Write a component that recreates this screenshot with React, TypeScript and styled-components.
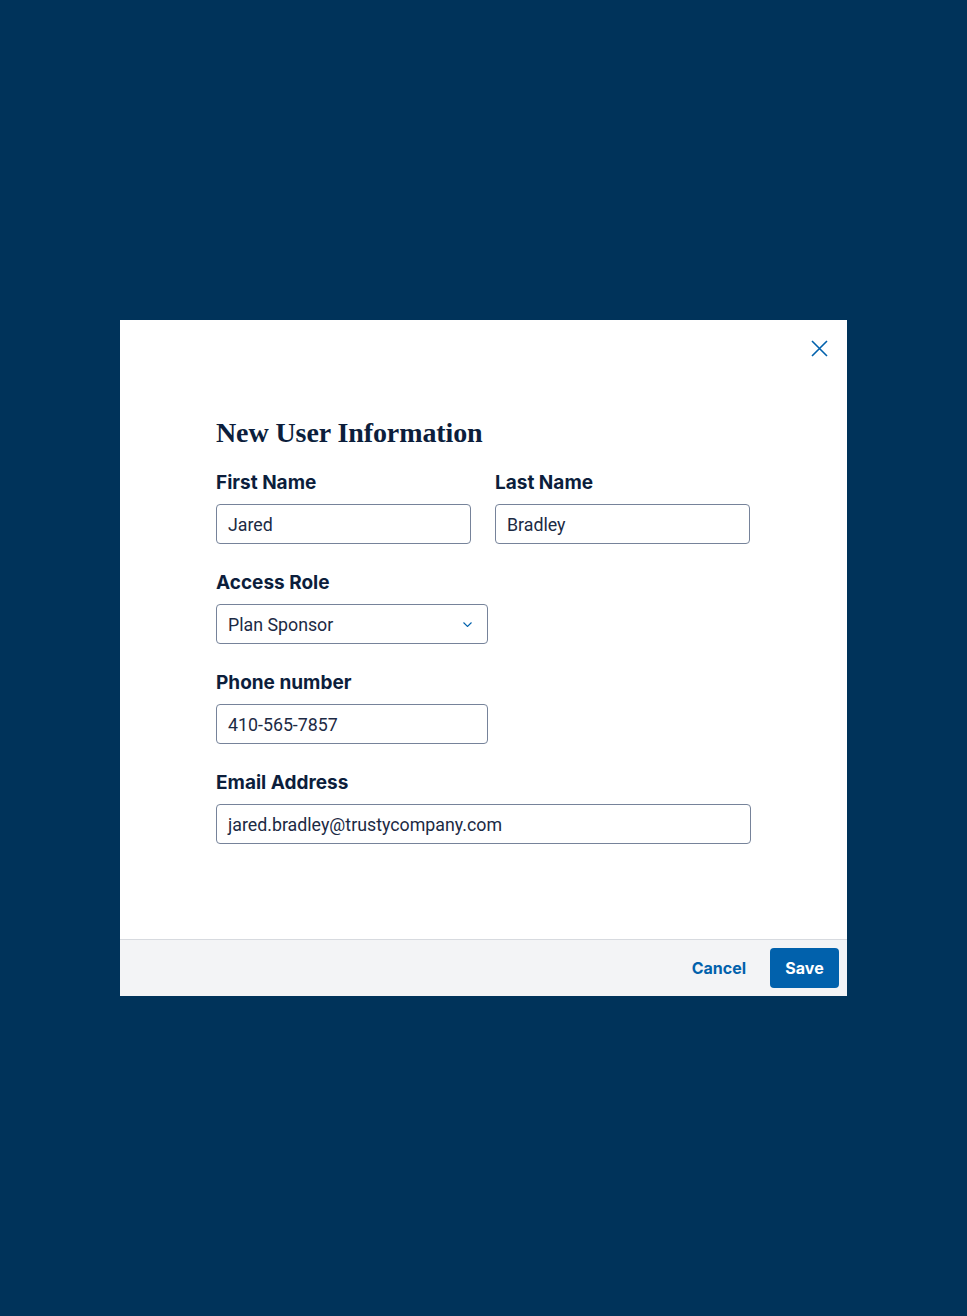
import React from 'react'
import styled, { createGlobalStyle } from 'styled-components'

const GlobalStyle = createGlobalStyle`
  html, body {
    margin: 0;
    padding: 0;
    background: #00335a;
  }
  body {
    font-family: Inter, "Liberation Sans", sans-serif;
    color: #0c1e3c;
  }
`

const Page = styled.div`
  min-height: 1316px;
  display: flex;
  justify-content: center;
  align-items: flex-start;
  padding-top: 320px;
  box-sizing: border-box;
`

const Dialog = styled.div`
  width: 727px;
  height: 676px;
  background: #ffffff;
  display: flex;
  flex-direction: column;
`

const Body = styled.div`
  position: relative;
  flex: 1;
  padding: 96px 96px 0;
`

const CloseButton = styled.button`
  position: absolute;
  top: 18px;
  right: 18px;
  width: 20px;
  height: 20px;
  padding: 0;
  border: 0;
  background: none;
  display: flex;
  align-items: center;
  justify-content: center;
  cursor: pointer;
`

const Title = styled.h2`
  margin: 0 0 21px;
  font-family: "Liberation Serif", serif;
  font-weight: 700;
  font-size: 28px;
  line-height: 34px;
  letter-spacing: -0.1px;
  color: #0c1e3c;
`

const Row = styled.div`
  display: flex;
  gap: 24px;
  margin-bottom: 27px;
`

const Field = styled.div<{ $width: number }>`
  width: ${({ $width }) => $width}px;
  display: flex;
  flex-direction: column;
`

const Label = styled.label`
  font-size: 19px;
  font-weight: 700;
  line-height: 24px;
  margin-bottom: 9px;
  color: #0c1e3c;
`

const InputBox = styled.div<{ $select?: boolean }>`
  height: 40px;
  box-sizing: border-box;
  border: 1px solid #76839a;
  border-radius: 4px;
  padding: 0 ${({ $select }) => ($select ? '15px' : '11px')} 0 11px;
  display: flex;
  align-items: center;
  justify-content: space-between;
  font-family: Roboto, "Liberation Sans", sans-serif;
  font-size: 17.8px;
  font-weight: 400;
  color: #1c2a44;
`

const Footer = styled.div`
  height: 56px;
  border-top: 1px solid #d7dadf;
  background: #f3f4f6;
  display: flex;
  align-items: center;
  justify-content: flex-end;
  padding: 0 8px 0 0;
  gap: 24px;
`

const TextButton = styled.button`
  border: 0;
  background: none;
  font-family: Inter, "Liberation Sans", sans-serif;
  font-size: 16px;
  font-weight: 700;
  color: #0161ac;
  padding: 0;
  cursor: pointer;
`

const PrimaryButton = styled.button`
  width: 69px;
  height: 40px;
  border: 0;
  border-radius: 4px;
  background: #0161ac;
  color: #ffffff;
  font-family: Inter, "Liberation Sans", sans-serif;
  font-size: 16px;
  font-weight: 700;
  cursor: pointer;
`

const Chevron = () => (
  <svg width="9" height="5" viewBox="0 0 9 5" fill="none">
    <path d="M0.5 0.5l4 4 4-4" stroke="#0161ac" strokeWidth="1.1" />
  </svg>
)

const CloseIcon = () => (
  <svg width="17" height="17" viewBox="0 0 17 17" fill="none">
    <path d="M1 1l15 15M16 1L1 16" stroke="#0161ac" strokeWidth="1.6" />
  </svg>
)

export default function App() {
  return (
    <>
      <GlobalStyle />
      <Page>
        <Dialog>
          <Body>
            <CloseButton aria-label='Close'>
              <CloseIcon />
            </CloseButton>
            <Title>New User Information</Title>
            <Row>
              <Field $width={255}>
                <Label>First Name</Label>
                <InputBox>Jared</InputBox>
              </Field>
              <Field $width={255}>
                <Label>Last Name</Label>
                <InputBox>Bradley</InputBox>
              </Field>
            </Row>
            <Row>
              <Field $width={272}>
                <Label>Access Role</Label>
                <InputBox $select>
                  Plan Sponsor
                  <Chevron />
                </InputBox>
              </Field>
            </Row>
            <Row>
              <Field $width={272}>
                <Label>Phone number</Label>
                <InputBox>410-565-7857</InputBox>
              </Field>
            </Row>
            <Row>
              <Field $width={535}>
                <Label>Email Address</Label>
                <InputBox>jared.bradley@trustycompany.com</InputBox>
              </Field>
            </Row>
          </Body>
          <Footer>
            <TextButton>Cancel</TextButton>
            <PrimaryButton>Save</PrimaryButton>
          </Footer>
        </Dialog>
      </Page>
    </>
  )
}
